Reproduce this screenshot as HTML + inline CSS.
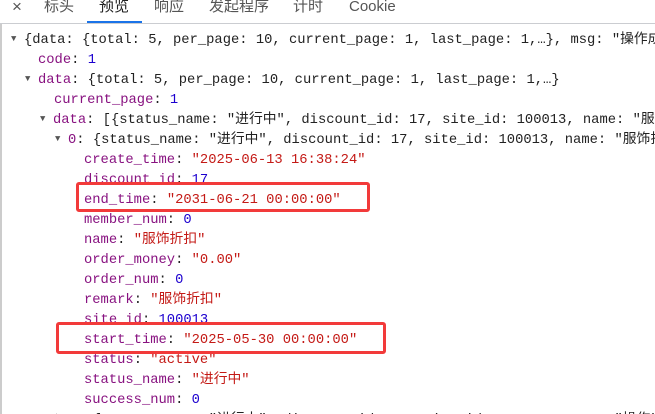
<!DOCTYPE html>
<html><head><meta charset="utf-8"><style>
html,body{margin:0;overflow:hidden}
body{width:655px;height:414px;background:#fff;position:relative;font-family:"Liberation Sans","Noto Sans CJK SC",sans-serif}
.bar{position:absolute;left:0;top:0;width:655px;height:23px;border-bottom:1px solid #cbcdd1;background:#fff}
.t{position:absolute;top:-2px;font-size:15px;color:#555;line-height:18px}
.ul{position:absolute;left:87px;top:21px;width:55px;height:2px;background:#1a73e8}
.lb{position:absolute;left:0;top:24px;width:2px;height:390px;background:#ccc}
.wrap{position:absolute;left:0;top:0;width:655px;height:414px;overflow:hidden}
.l{position:absolute;white-space:pre;font-family:"Liberation Mono","Noto Sans CJK SC",monospace;font-size:13.8px;line-height:20px;color:#222}
.k{color:#881280}.s{color:#c41a16}.n{color:#1c00cf}
.a{display:inline-block;width:13px;font-size:9px;color:#555;position:relative;top:-2px}
.box{position:absolute;border:3px solid #f23a3a;border-radius:3px}
</style></head><body>
<div class="bar"></div>
<div class="t" style="left:12px;font-size:17px">×</div>
<div class="t" style="left:44px">标头</div>
<div class="t" style="left:99px;color:#222">预览</div>
<div class="t" style="left:154px">响应</div>
<div class="t" style="left:209px">发起程序</div>
<div class="t" style="left:293px">计时</div>
<div class="t" style="left:349px">Cookie</div>
<div class="ul"></div>
<div class="lb"></div>
<div class="wrap">
<div class="l" style="left:11px;top:31px"><span class="a">▼</span>{data: {total: 5, per_page: 10, current_page: 1, last_page: 1,…}, msg: "操作成功"}</div>
<div class="l" style="left:38px;top:51px"><span class="k">code</span>: <span class="n">1</span></div>
<div class="l" style="left:25px;top:71px"><span class="a">▼</span><span class="k">data</span>: {total: 5, per_page: 10, current_page: 1, last_page: 1,…}</div>
<div class="l" style="left:54px;top:91px"><span class="k">current_page</span>: <span class="n">1</span></div>
<div class="l" style="left:40px;top:111px"><span class="a">▼</span><span class="k">data</span>: [{status_name: "进行中", discount_id: 17, site_id: 100013, name: "服饰折扣",…},…]</div>
<div class="l" style="left:55px;top:131px"><span class="a">▼</span><span class="k">0</span>: {status_name: "进行中", discount_id: 17, site_id: 100013, name: "服饰折扣",…}</div>
<div class="l" style="left:84px;top:151px"><span class="k">create_time</span>: <span class="s">"2025-06-13 16:38:24"</span></div>
<div class="l" style="left:84px;top:171px"><span class="k">discount_id</span>: <span class="n">17</span></div>
<div class="l" style="left:84px;top:191px"><span class="k">end_time</span>: <span class="s">"2031-06-21 00:00:00"</span></div>
<div class="l" style="left:84px;top:211px"><span class="k">member_num</span>: <span class="n">0</span></div>
<div class="l" style="left:84px;top:231px"><span class="k">name</span>: <span class="s">"服饰折扣"</span></div>
<div class="l" style="left:84px;top:251px"><span class="k">order_money</span>: <span class="s">"0.00"</span></div>
<div class="l" style="left:84px;top:271px"><span class="k">order_num</span>: <span class="n">0</span></div>
<div class="l" style="left:84px;top:291px"><span class="k">remark</span>: <span class="s">"服饰折扣"</span></div>
<div class="l" style="left:84px;top:311px"><span class="k">site_id</span>: <span class="n">100013</span></div>
<div class="l" style="left:84px;top:331px"><span class="k">start_time</span>: <span class="s">"2025-05-30 00:00:00"</span></div>
<div class="l" style="left:84px;top:351px"><span class="k">status</span>: <span class="s">"active"</span></div>
<div class="l" style="left:84px;top:371px"><span class="k">status_name</span>: <span class="s">"进行中"</span></div>
<div class="l" style="left:84px;top:391px"><span class="k">success_num</span>: <span class="n">0</span></div>
<div class="l" style="left:55px;top:411px"><span class="a">▶</span><span class="k">1</span>: {status_name: "进行中", discount_id: 16, site_id: 100013, name: "操作"}</div>
</div>
<div class="box" style="left:76px;top:182px;width:288px;height:24px"></div>
<div class="box" style="left:56px;top:322px;width:324px;height:26px"></div>
</body></html>
